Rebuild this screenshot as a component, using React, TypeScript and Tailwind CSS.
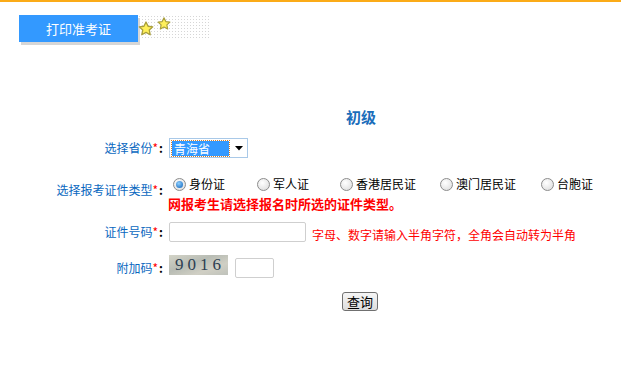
import React from "react";

const font = { fontFamily: '"Noto Sans CJK SC", "Noto Sans", sans-serif' };

function Star({ size }: { size: number }) {
  return (
    <svg width={size} height={size} viewBox="0 0 24 24">
      <path
        d="M12 1.5l3.1 6.4 7 .9-5.2 4.8 1.4 7L12 17.1l-6.3 3.5 1.4-7-5.2-4.8 7-.9z"
        fill="#fff05a"
        stroke="#a99f3c"
        strokeWidth="2"
        strokeLinejoin="round"
      />
    </svg>
  );
}

function Radio({ checked }: { checked?: boolean }) {
  return (
    <span className="inline-flex w-[13px] h-[13px] rounded-full border border-[#8c8c8c] bg-[radial-gradient(circle_at_40%_35%,#ffffff,#d9d9d9)] items-center justify-center shrink-0">
      {checked && (
        <span className="w-[7px] h-[7px] rounded-full bg-[radial-gradient(circle_at_40%_35%,#8fd0ff,#0a5fb8)]" />
      )}
    </span>
  );
}

function Label({ text, className = "" }: { text: string; className?: string }) {
  return (
    <div className={`w-[163px] shrink-0 text-right text-[12px] leading-[16px] text-[#0a68c0] ${className}`}>
      {text}
      <span className="text-[#ff0000]">*</span>
      <span className="text-black font-bold ml-[1px]">:</span>
    </div>
  );
}

export default function App() {
  const radios = [
    { t: "身份证", w: "w-[84px]", c: true },
    { t: "军人证", w: "w-[83px]" },
    { t: "香港居民证", w: "w-[100px]" },
    { t: "澳门居民证", w: "w-[101px]" },
    { t: "台胞证", w: "w-[60px]" },
  ];
  return (
    <div className="w-[621px] h-[385px] bg-white overflow-hidden" style={font}>
      <div className="h-[2px] bg-[#fbab18]" />
      <div className="flex items-start mt-[13px] ml-[19px]">
        <div className="w-[119px] h-[27px] bg-[#3399ff] shadow-[2px_3px_0_#d6d6d6] text-white text-[13px] flex items-center justify-center">
          打印准考证
        </div>
        <div className="relative w-[72px] h-[23px] bg-[radial-gradient(#d6d6d6_0.7px,transparent_0.8px)] bg-[length:3px_3px]">
          <span className="absolute left-[0px] top-[6px]">
            <Star size={16} />
          </span>
          <span className="absolute left-[19px] top-[2px]">
            <Star size={14} />
          </span>
        </div>
      </div>

      <div className="mt-[65px] h-[20px] pl-[346px] text-[15px] font-bold text-[#1a6dba] leading-[20px]">
        初级
      </div>

      <div className="mt-[11px] flex items-center h-[20px]">
        <Label text="选择省份" />
        <div className="ml-[6px] w-[79px] h-[20px] border border-[#a9c9e8] bg-white flex items-center pl-[2px] pr-[4px]">
          <div className="w-[57px] h-[15px] bg-[#3399ff] outline-1 outline-dotted outline-[#d6802a] text-white text-[12px] leading-[15px] pl-[2px]">
            青海省
          </div>
          <div className="flex-1 flex justify-end">
            <svg width="8" height="5" viewBox="0 0 8 5">
              <path d="M0 0h8L4 4.5z" fill="#000" />
            </svg>
          </div>
        </div>
      </div>

      <div className="mt-[18px] flex items-center">
        <Label text="选择报考证件类型" className="pb-[8px]" />
        <div className="ml-[6px]">
          <div className="h-[16px] flex items-center pl-[4px]">
            {radios.map((r) => (
              <div key={r.t} className={`${r.w} flex items-center shrink-0`}>
                <Radio checked={r.c} />
                <span className="ml-[3px] text-[12px] text-black">{r.t}</span>
              </div>
            ))}
          </div>
          <div className="mt-[4px] h-[16px] text-[13px] font-bold text-[#ff0000] leading-[16px] -ml-[1px]">
            网报考生请选择报名时所选的证件类型。
          </div>
        </div>
      </div>

      <div className="mt-[10px] flex items-center h-[20px]">
        <Label text="证件号码" />
        <div className="ml-[6px] w-[137px] h-[20px] border border-[#cfcfcf] rounded-[2px] bg-white" />
        <div className="ml-[6px] pt-[6px] text-[12px] text-[#ff0000] leading-[16px] whitespace-nowrap">
          字母、数字请输入半角字符，全角会自动转为半角
        </div>
      </div>

      <div className="mt-[13px] flex items-start">
        <Label text="附加码" className="mt-[5px]" />
        <div className="ml-[6px] w-[59px] h-[20px] bg-[linear-gradient(160deg,#d4d4c8,#b8bcb4_40%,#d0cfc4_70%,#bfc2bb)] flex items-center justify-center">
          <span
            className="text-[17px] leading-[20px] text-[#2d3e52] tracking-[4px] pl-[3px]"
            style={{ fontFamily: '"Liberation Serif", serif' }}
          >
            9016
          </span>
        </div>
        <div className="ml-[7px] mt-[3px] w-[39px] h-[20px] border border-[#cfcfcf] rounded-[2px] bg-white" />
      </div>

      <div className="mt-[14px] pl-[342px]">
        <div className="w-[36px] h-[19px] border border-[#707070] rounded-[3px] bg-[linear-gradient(#f6f6f6,#dcdcdc)] text-[13px] leading-[17px] text-black text-center">
          查询
        </div>
      </div>
    </div>
  );
}
